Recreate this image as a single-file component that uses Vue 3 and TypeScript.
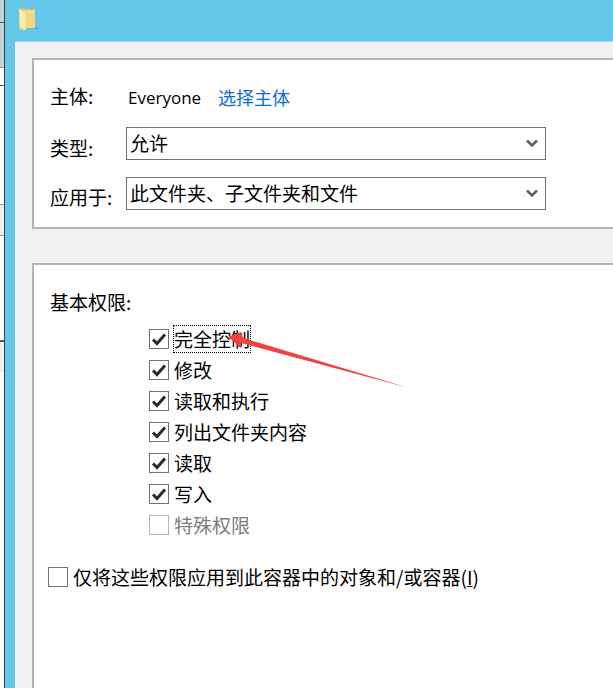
<template>
  <div class="screen">
    <!-- slice of the window behind the dialog -->
    <div class="behind">
      <div v-for="(s, i) in behindSlices" :key="i" :class="s.cls" :style="{ height: s.h + 'px' }"></div>
    </div>
    <div class="dialog">
      <div class="titlebar">
        <svg class="folder" width="24" height="26" viewBox="0 0 24 26">
          <path d="M6 21h15l1.500 2H9z" fill="#4f9dbb" opacity="0.55" />
          <path d="M3 3l4-1 1 1h9l.5 1v17H6z" fill="#e9c766" />
          <path d="M2 2.500 9 5 l9 -.5 v17 l-10 1 -1 2 -4.500 -2z" fill="#f6e59c" />
          <path d="M2 2.500 9 6.500 v18 l-6.500-3z" fill="#fbeeb4" stroke="#dcbf63" stroke-width="0.6" />
          <path d="M9 6.500 h9 v15 h-9z" fill="#f1d77f" />
        </svg>
      </div>
      <div class="body">
        <section class="group first">
          <div class="row principal">
            <span class="label">主体:</span>
            <span class="name">Everyone</span>
            <a class="link">选择主体</a>
          </div>
          <div class="row type-row">
            <span class="label low">类型:</span>
            <div class="select">
              <span>允许</span>
              <svg class="chev" width="12" height="9" viewBox="0 0 12 9"><path d="M1 1.500 6 6.500 11 1.500" fill="none" stroke="#606060" stroke-width="2.600" /></svg>
            </div>
          </div>
          <div class="row apply-row">
            <span class="label lower">应用于:</span>
            <div class="select">
              <span>此文件夹、子文件夹和文件</span>
              <svg class="chev" width="12" height="9" viewBox="0 0 12 9"><path d="M1 1.500 6 6.500 11 1.500" fill="none" stroke="#606060" stroke-width="2.600" /></svg>
            </div>
          </div>
        </section>
        <section class="group second">
          <div class="heading">基本权限:</div>
          <ul class="perms">
            <li v-for="p in perms" :key="p.text" class="perm" :class="{ disabled: p.disabled }">
              <span class="box">
                <svg v-if="p.checked" width="16" height="14" viewBox="0 0 16 14"><path d="M2 7.500 6 11.500 14 2.500" fill="none" stroke="#2b2b2b" stroke-width="3" /></svg>
              </span>
              <span class="text" :class="{ focused: p.focused }">{{ p.text }}</span>
            </li>
          </ul>
          <div class="only">
            <span class="box"></span>
            <span class="text">仅将这些权限应用到此容器中的对象和/或容器(<u>I</u>)</span>
          </div>
        </section>
      </div>
    </div>
    <svg class="arrow" width="613" height="688" viewBox="0 0 613 688">
      <polygon points="228,337 241,332 243,338 409,388 241,343 241,348" fill="#f4403f" />
    </svg>
  </div>
</template>

<script setup lang="ts">
interface Perm {
  text: string
  checked: boolean
  disabled?: boolean
  focused?: boolean
}

const perms: Perm[] = [
  { text: '完全控制', checked: true, focused: true },
  { text: '修改', checked: true },
  { text: '读取和执行', checked: true },
  { text: '列出文件夹内容', checked: true },
  { text: '读取', checked: true },
  { text: '写入', checked: true },
  { text: '特殊权限', checked: false, disabled: true },
]

const behindSlices = [
  { cls: 'b-steel', h: 22 },
  { cls: 'b-dark', h: 1 },
  { cls: 'b-steel', h: 44 },
  { cls: 'b-grey', h: 1 },
  { cls: 'b-white', h: 17 },
  { cls: 'b-dark', h: 1 },
  { cls: 'b-white', h: 118 },
  { cls: 'b-grey', h: 1 },
  { cls: 'b-light', h: 30 },
  { cls: 'b-grey', h: 1 },
  { cls: 'b-white', h: 104 },
  { cls: 'b-dark', h: 2 },
  { cls: 'b-light', h: 30 },
  { cls: 'b-white', h: 316 },
]
</script>

<style>
html,
body {
  margin: 0;
  background: #fff;
}
</style>

<style scoped>
.screen {
  position: relative;
  display: flex;
  width: 613px;
  height: 688px;
  overflow: hidden;
  font-family: "Noto Sans CJK SC", "Noto Sans", sans-serif;
  font-size: 19px;
  color: #000;
}
.behind {
  width: 4px;
  flex: none;
  border-right: 1px solid #3c3c3c;
  display: flex;
  flex-direction: column;
}
.b-steel { background: #c3d3da; }
.b-dark { background: #555; }
.b-grey { background: #9aa0a6; }
.b-white { background: #fff; }
.b-light { background: #eeeeee; }
.dialog {
  flex: 1;
  min-width: 0;
  background: #64c8ea;
  display: flex;
  flex-direction: column;
}
.titlebar {
  height: 41px;
  flex: none;
  padding: 6px 0 0 12px;
  box-sizing: border-box;
}
.folder {
  display: block;
}
.body {
  flex: 1;
  margin-left: 10px;
  background: #f0f0f0;
  border-top: 1px solid #b4d2de;
  padding: 16px 0 0 17px;
  box-sizing: border-box;
}
.group {
  background: #fff;
  border: solid #b4b4b4;
  border-width: 2px 0 2px 2px;
  box-sizing: border-box;
  padding-left: 16px;
}
.first {
  height: 171px;
  margin-bottom: 34px;
  padding-top: 1px;
}
.second {
  height: 500px;
  padding-top: 1px;
}
.row {
  display: flex;
  align-items: center;
}
.label {
  width: 76px;
  flex: none;
  line-height: 24px;
}
.low {
  position: relative;
  top: 4px;
}
.lower {
  position: relative;
  top: 3px;
}
.principal {
  height: 66px;
  padding-top: 4px;
  box-sizing: border-box;
}
.name {
  font-family: "Open Sans", sans-serif;
  font-size: 17px;
  margin-left: 2px;
  width: 90px;
  position: relative;
  top: 1px;
}
.link {
  color: #0a6fd0;
  font-size: 18px;
  position: relative;
  top: 1px;
}
.type-row {
  height: 33px;
}
.apply-row {
  height: 33px;
  margin-top: 17px;
}
.select {
  width: 420px;
  height: 33px;
  box-sizing: border-box;
  border: 1.500px solid #6f6f6f;
  display: flex;
  align-items: center;
  justify-content: space-between;
  padding: 0 7px 2px 3px;
  line-height: 30px;
}
.chev {
  flex: none;
  position: relative;
  top: 1px;
}
.heading {
  margin-top: 24px;
  line-height: 24px;
}
.perms {
  list-style: none;
  margin: 9px 0 0;
  padding: 0 0 0 99px;
}
.perm {
  display: flex;
  align-items: center;
  height: 31px;
}
.box {
  width: 20px;
  height: 20px;
  flex: none;
  box-sizing: border-box;
  border: 1.500px solid #707070;
  display: flex;
  align-items: center;
  justify-content: center;
  background: #fff;
}
.text {
  margin-left: 5px;
  white-space: nowrap;
  line-height: 24px;
}
.focused {
  outline: 1px dotted #000;
  outline-offset: 0;
  padding: 1px 0;
}
.disabled .box {
  border-color: #b5b5b5;
}
.disabled .text {
  color: #7d7d7d;
}
.only {
  display: flex;
  align-items: center;
  margin: 25px 0 0 -2px;
}
.arrow {
  position: absolute;
  left: 0;
  top: 0;
  pointer-events: none;
}
</style>
